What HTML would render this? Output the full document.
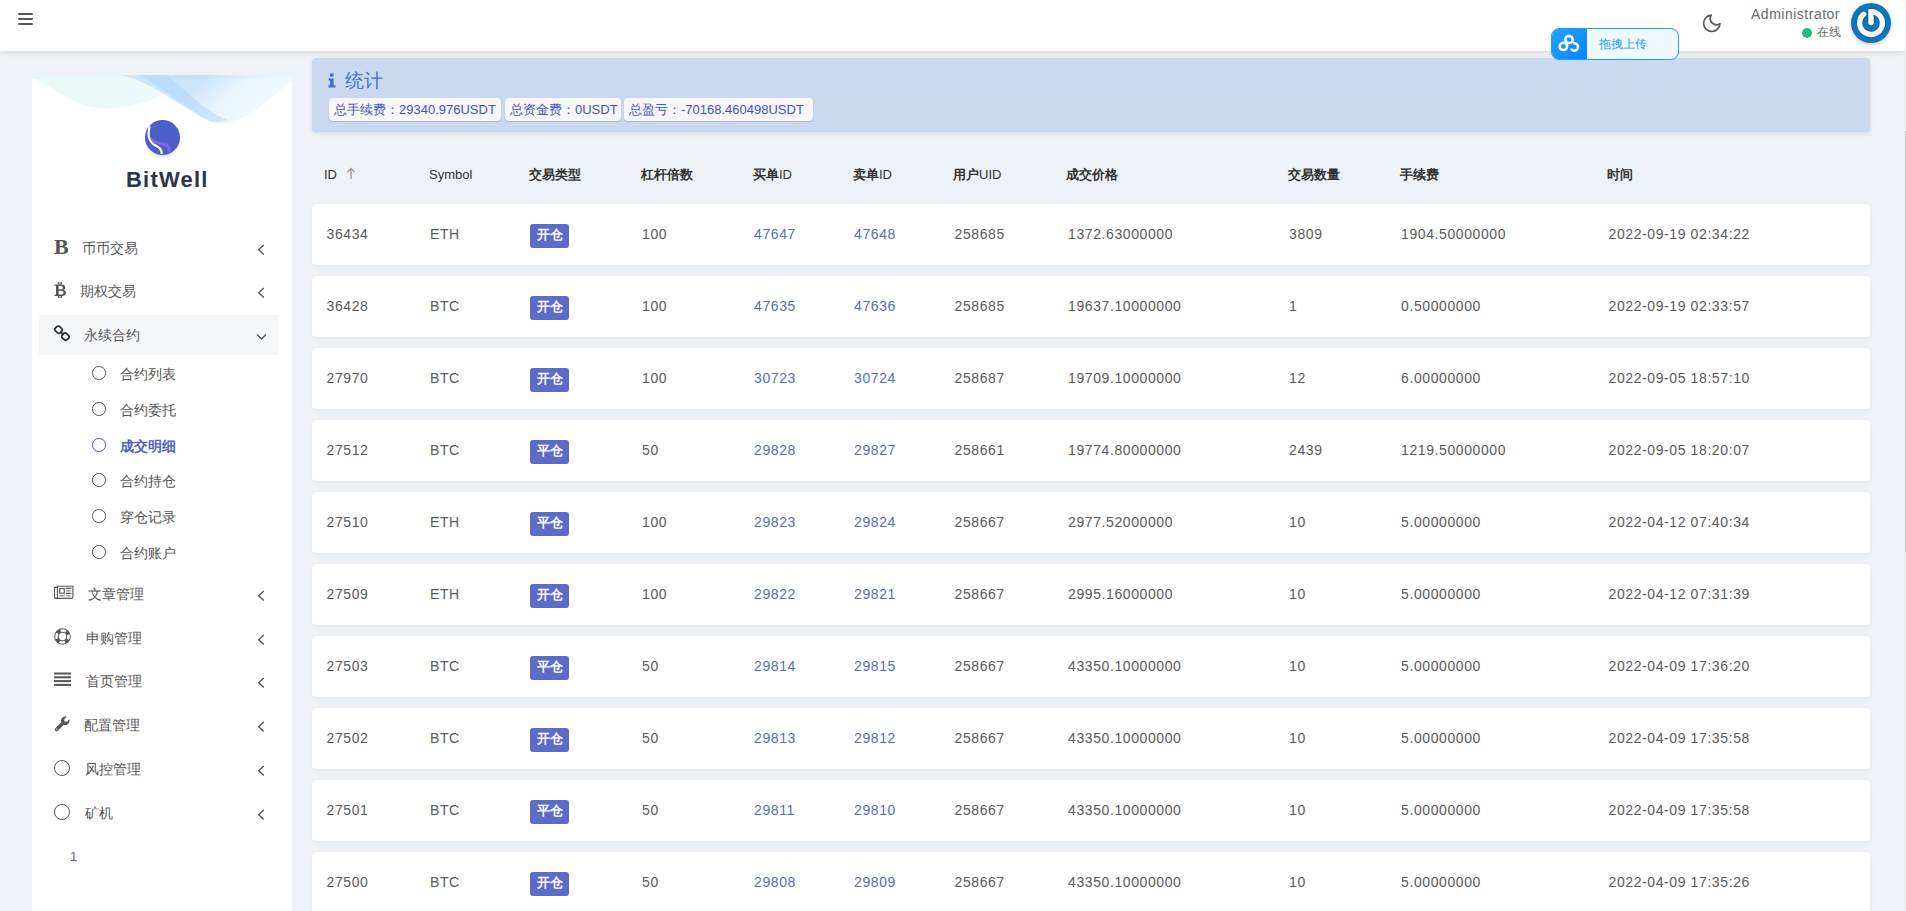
<!DOCTYPE html>
<html><head><meta charset="utf-8">
<style>
*{box-sizing:border-box;margin:0;padding:0}
html,body{width:1906px;height:911px;overflow:hidden}
body{background:#eef1f6;font-family:"Liberation Sans",sans-serif;color:#333;position:relative}
.abs{position:absolute}
#hdr{position:absolute;left:0;top:0;width:1905px;height:51px;background:#fff;box-shadow:0 1px 6px rgba(0,0,0,.12);z-index:5}
#side{position:absolute;left:32px;top:75px;width:260px;height:900px;background:#fff;overflow:hidden}
#stats{position:absolute;left:312px;top:58px;width:1558px;height:74px;background:#cad9ef;border-radius:4px;box-shadow:0 2px 4px rgba(0,0,0,.08)}
.row{position:absolute;left:312px;width:1558px;height:61px;background:#fff;border-radius:4px;box-shadow:0 2px 5px rgba(0,0,0,.05)}
.c{position:absolute;font-size:14px;line-height:16px;color:#5a5a5a;letter-spacing:0.6px;white-space:nowrap}
.th{position:absolute;top:167px;font-size:13px;line-height:16px;color:#333;white-space:nowrap}.th b{font-weight:bold}
.lk{color:#5a6bc6}
.bd{position:absolute;width:39px;height:24px;background:#5b6bc6;border-radius:3px;color:#fff;font-size:13px;font-weight:bold;text-align:center;line-height:22px}
.mi{position:absolute;left:0;width:260px;height:40px;font-size:14px;color:#555}
.sb{position:absolute;top:40px;height:23px;background:#f6f7fa;border-radius:4px;box-shadow:0 1px 1px rgba(60,80,120,.25);font-size:13px;line-height:23px;color:#4453bd;padding-left:5px;white-space:nowrap;letter-spacing:0}
.mt{position:absolute;font-size:14px;line-height:20px;color:#555;white-space:nowrap}

</style></head><body>
<div id="hdr">
  <div class="abs" style="left:18px;top:13px;width:15px;height:2px;background:#585858;border-radius:1px"></div>
  <div class="abs" style="left:18px;top:18px;width:15px;height:2px;background:#585858;border-radius:1px"></div>
  <div class="abs" style="left:18px;top:23px;width:15px;height:2px;background:#585858;border-radius:1px"></div>
  <svg class="abs" style="left:1701px;top:13px" width="22" height="22" viewBox="0 0 22 22"><path d="M10.3 2.1A8.2 8.2 0 1 0 19 10.6A6.2 6.2 0 0 1 10.3 2.1Z" fill="none" stroke="#5a5a5a" stroke-width="1.7" stroke-linejoin="round"/></svg>
  <div class="abs" style="right:65px;top:5px;font-size:14px;line-height:18px;color:#6a6a6a;letter-spacing:0.5px;white-space:nowrap">Administrator</div>
  <div class="abs" style="left:1802px;top:28px;width:10px;height:10px;border-radius:50%;background:#26b77a"></div>
  <div class="abs" style="left:1817px;top:24px;font-size:12px;line-height:17px;color:#666">在线</div>
  <div class="abs" style="left:1851px;top:3px;width:40px;height:40px;border-radius:50%;background:#0f76bb;box-shadow:0 2px 4px rgba(0,0,0,.2)">
    <svg class="abs" style="left:0;top:0" width="40" height="40" viewBox="0 0 40 40"><path d="M20 19.6V8.6A11.4 11.4 0 1 1 12.67 11.27" fill="none" stroke="#fafafa" stroke-width="5.4" stroke-linecap="round" style="filter:drop-shadow(0 0.6px 0.8px rgba(0,0,0,.35))"/></svg>
  </div>
</div>
<div id="up" class="abs" style="left:1551px;top:28px;width:128px;height:32px;border:1px solid #1c9dff;border-radius:8px;background:#eef8ff;overflow:hidden;z-index:6">
  <div class="abs" style="left:0;top:0;width:35px;height:30px;background:linear-gradient(135deg,#21a4ff,#0a82ff)"></div>
  <svg class="abs" style="left:6px;top:4px" width="24" height="22" viewBox="0 0 24 22"><circle cx="11" cy="6.6" r="3.7" fill="none" stroke="#fff" stroke-width="2.5"/><circle cx="5.4" cy="13.4" r="3.7" fill="none" stroke="#fff" stroke-width="2.5"/><path d="M13 15.6A3.7 3.7 0 1 0 15.2 10.5" fill="none" stroke="#fff" stroke-width="2.4"/></svg>
  <div class="abs" style="left:47px;top:7px;font-size:12px;line-height:16px;color:#1b9cff;white-space:nowrap">拖拽上传</div>
</div>
<div id="stats">
  <svg class="abs" style="left:16px;top:15px" width="8" height="15" viewBox="0 0 8 15"><rect x="2" y="0.5" width="3.6" height="3" fill="#3d6dd6"/><path d="M0.5 5.5H5.6V12.2H7.5V14.5H0.5V12.2H2.2V7.6H0.5Z" fill="#3d6dd6"/></svg>
  <div class="abs" style="left:33px;top:10px;font-size:19px;line-height:25px;color:#4a70d0">统计</div>
  <div class="sb" style="left:17px;width:172px">总手续费：29340.976USDT</div>
  <div class="sb" style="left:193px;width:116px">总资金费：0USDT</div>
  <div class="sb" style="left:312px;width:189px">总盈亏：-70168.460498USDT</div>
</div>
<div class="abs" style="left:1905px;top:0;width:1px;height:911px;background:#ebebeb;z-index:9"></div>
<div class="abs" style="left:1905px;top:131px;width:1px;height:421px;background:#c3c3c3;z-index:9"></div>
<div id="side">
  <svg class="abs" style="left:0;top:0" width="260" height="60" viewBox="0 0 260 60">
    <defs>
      <linearGradient id="wg1" x1="0" y1="0" x2="1" y2="0"><stop offset="0" stop-color="#e2f7f1"/><stop offset="1" stop-color="#eaf5fb"/></linearGradient>
      <linearGradient id="wg2" x1="0" y1="0" x2="1" y2="0.3"><stop offset="0" stop-color="#c4e2fb"/><stop offset="0.45" stop-color="#b3d9f9"/><stop offset="0.7" stop-color="#dfeffd"/><stop offset="1" stop-color="#eef7fe"/></linearGradient>
    </defs>
    <rect x="0" y="0" width="260" height="4" fill="#eef6fc"/>
    <path d="M0 0H170C150 6 130 22 110 28C90 34 70 36 52 30C35 24 18 10 0 3Z" fill="url(#wg1)" opacity="0.7"/>
    <path d="M90 0H260V6C245 16 225 40 200 47C188 50 180 48 170 42C145 28 120 8 90 0Z" fill="url(#wg2)" opacity="0.68"/>
    <path d="M105 0H135C150 12 170 34 195 45C185 49 176 47 168 41C145 26 125 8 105 0Z" fill="#a9d3f8" opacity="0.45"/>
  </svg>
  <div class="abs" style="left:113px;top:45px;width:35px;height:35px;border-radius:50%;background:#4d5ec6;box-shadow:0 2px 3px rgba(0,0,0,.12);overflow:hidden">
    <svg class="abs" style="left:0;top:0" width="35" height="35" viewBox="0 0 35 35"><path d="M5.8 18.6C9 22.6 14 23.4 19 24.2C23.2 25 25 27.5 24 31" fill="none" stroke="#7a68f0" stroke-width="2.8" stroke-linecap="round"/><path d="M4.8 6.2C2.6 13.5 3 20.5 9 24.6C13 27.2 16.6 27.6 16.8 34" fill="none" stroke="#fff" stroke-width="2.2"/></svg>
  </div>
  <div class="abs" style="left:94px;top:93px;font-size:22px;line-height:24px;font-weight:bold;color:#2d3646;letter-spacing:1.2px;white-space:nowrap">BitWell</div>

<div class="abs" style="left:7px;top:240px;width:239px;height:40px;background:#f5f6f8"></div>
<div class="abs" style="left:22px;top:161px;font-family:'Liberation Serif',serif;font-weight:bold;font-size:22px;line-height:22px;color:#555">B</div>
<div class="mt" style="left:50px;top:163px">币币交易</div>
<svg class="abs" style="left:225px;top:169px" width="8" height="12" viewBox="0 0 8 12"><path d="M6.8 1L1.7 5.7L6.8 10.4" fill="none" stroke="#555" stroke-width="1.4"/></svg>
<svg class="abs" style="left:22px;top:207px" width="13" height="16" viewBox="0 0 13 16"><path d="M0.5 2.5H7.5C10 2.5 11.2 3.8 11.2 5.6C11.2 6.9 10.3 7.7 9.4 8C10.8 8.3 12 9.3 12 11C12 13 10.5 14 8 14H0.5V12.8H2V3.7H0.5Z" fill="#555"/><path d="M4.6 4V7.3H7.2C8.3 7.3 8.8 6.7 8.8 5.7C8.8 4.7 8.2 4 7.2 4ZM4.6 8.7V12.5H7.5C8.8 12.5 9.5 11.8 9.5 10.6C9.5 9.4 8.8 8.7 7.5 8.7Z" fill="#fff"/><rect x="3.9" y="0" width="1.5" height="2.5" fill="#555"/><rect x="6.5" y="0" width="1.5" height="2.5" fill="#555"/><rect x="3.9" y="14" width="1.5" height="2" fill="#555"/><rect x="6.5" y="14" width="1.5" height="2" fill="#555"/></svg>
<div class="mt" style="left:48px;top:206px">期权交易</div>
<svg class="abs" style="left:225px;top:212px" width="8" height="12" viewBox="0 0 8 12"><path d="M6.8 1L1.7 5.7L6.8 10.4" fill="none" stroke="#555" stroke-width="1.4"/></svg>
<svg class="abs" style="left:22px;top:250px" width="17" height="17" viewBox="0 0 17 17"><rect x="1.2" y="1.7" width="6.8" height="6" rx="2.1" transform="rotate(45 4.6 4.7)" fill="none" stroke="#2b2b2b" stroke-width="1.7"/><rect x="8" y="8.6" width="6.8" height="6" rx="2.1" transform="rotate(45 11.4 11.6)" fill="none" stroke="#2b2b2b" stroke-width="1.7"/><path d="M6.3 6.6L9.6 9.8" stroke="#2b2b2b" stroke-width="1.8"/></svg>
<div class="mt" style="left:52px;top:250px">永续合约</div>
<svg class="abs" style="left:224px;top:258px" width="11" height="8" viewBox="0 0 11 8"><path d="M1 1.5L5.5 6L10 1.5" fill="none" stroke="#555" stroke-width="1.4"/></svg>
<svg class="abs" style="left:22px;top:510px" width="20" height="15" viewBox="0 0 20 15"><path d="M3.4 1.3H18.9V12A1.4 1.4 0 0 1 17.5 13.4H1.7A1.3 1.3 0 0 1 0.5 12.1V2.4H3.4Z" fill="none" stroke="#555" stroke-width="1.1" stroke-linejoin="round"/><path d="M3.4 1.3V13.2" stroke="#555" stroke-width="1.1"/><rect x="5.7" y="3.6" width="4.6" height="4.6" fill="none" stroke="#555" stroke-width="1.1"/><path d="M12.2 3.4H16.9M12.2 8.4H16.9" stroke="#555" stroke-width="1.1" stroke-linecap="round"/><path d="M12.2 5.9H16.9M5.2 10.9H10.8M12.2 10.9H16.9" stroke="#888" stroke-width="1.3"/></svg>
<div class="mt" style="left:56px;top:509px">文章管理</div>
<svg class="abs" style="left:225px;top:515px" width="8" height="12" viewBox="0 0 8 12"><path d="M6.8 1L1.7 5.7L6.8 10.4" fill="none" stroke="#555" stroke-width="1.4"/></svg>
<svg class="abs" style="left:22px;top:553px" width="17" height="17" viewBox="0 0 17 17"><circle cx="8.5" cy="8.5" r="8.3" fill="#555"/><circle cx="8.5" cy="8.5" r="3.7" fill="#fff"/><circle cx="8.5" cy="8.5" r="6" fill="none" stroke="#fff" stroke-width="2.5" stroke-dasharray="5.6 3.82" stroke-dashoffset="2.8"/></svg>
<div class="mt" style="left:54px;top:553px">申购管理</div>
<svg class="abs" style="left:225px;top:559px" width="8" height="12" viewBox="0 0 8 12"><path d="M6.8 1L1.7 5.7L6.8 10.4" fill="none" stroke="#555" stroke-width="1.4"/></svg>
<svg class="abs" style="left:22px;top:597px" width="17" height="14" viewBox="0 0 17 14"><rect x="0" y="0.5" width="17" height="2" fill="#555"/><rect x="0" y="4.3" width="17" height="2" fill="#555"/><rect x="0" y="8.1" width="17" height="2" fill="#555"/><rect x="0" y="11.9" width="17" height="2" fill="#555"/></svg>
<div class="mt" style="left:54px;top:596px">首页管理</div>
<svg class="abs" style="left:225px;top:602px" width="8" height="12" viewBox="0 0 8 12"><path d="M6.8 1L1.7 5.7L6.8 10.4" fill="none" stroke="#555" stroke-width="1.4"/></svg>
<svg class="abs" style="left:22px;top:641px" width="16" height="16" viewBox="0 0 16 16"><path d="M2.6 13.4L9 7" stroke="#555" stroke-width="3.5" stroke-linecap="round"/><circle cx="11.3" cy="4.7" r="4.3" fill="#555"/><circle cx="12.1" cy="3.9" r="1.9" fill="#fff"/><path d="M10.8 2.6L13.4 5.2L17 1.6L14.4 -1Z" fill="#fff"/><circle cx="2.9" cy="13.1" r="0.7" fill="#fff"/></svg>
<div class="mt" style="left:52px;top:640px">配置管理</div>
<svg class="abs" style="left:225px;top:646px" width="8" height="12" viewBox="0 0 8 12"><path d="M6.8 1L1.7 5.7L6.8 10.4" fill="none" stroke="#555" stroke-width="1.4"/></svg>
<div class="abs" style="left:22px;top:685px;width:16px;height:16px;border:1.6px solid #555;border-radius:50%"></div>
<div class="mt" style="left:53px;top:684px">风控管理</div>
<svg class="abs" style="left:225px;top:690px" width="8" height="12" viewBox="0 0 8 12"><path d="M6.8 1L1.7 5.7L6.8 10.4" fill="none" stroke="#555" stroke-width="1.4"/></svg>
<div class="abs" style="left:22px;top:729px;width:16px;height:16px;border:1.6px solid #555;border-radius:50%"></div>
<div class="mt" style="left:53px;top:728px">矿机</div>
<svg class="abs" style="left:225px;top:734px" width="8" height="12" viewBox="0 0 8 12"><path d="M6.8 1L1.7 5.7L6.8 10.4" fill="none" stroke="#555" stroke-width="1.4"/></svg>
<div class="abs" style="left:60px;top:291px;width:13.5px;height:13.5px;border:1.3px solid #555;border-radius:50%"></div>
<div class="mt" style="left:88px;top:289px;">合约列表</div>
<div class="abs" style="left:60px;top:327px;width:13.5px;height:13.5px;border:1.3px solid #555;border-radius:50%"></div>
<div class="mt" style="left:88px;top:325px;">合约委托</div>
<div class="abs" style="left:60px;top:363px;width:13.5px;height:13.5px;border:1.3px solid #4f5fc6;border-radius:50%"></div>
<div class="mt" style="left:88px;top:361px;font-weight:bold;color:#4f5fc6">成交明细</div>
<div class="abs" style="left:60px;top:398px;width:13.5px;height:13.5px;border:1.3px solid #555;border-radius:50%"></div>
<div class="mt" style="left:88px;top:396px;">合约持仓</div>
<div class="abs" style="left:60px;top:434px;width:13.5px;height:13.5px;border:1.3px solid #555;border-radius:50%"></div>
<div class="mt" style="left:88px;top:432px;">穿仓记录</div>
<div class="abs" style="left:60px;top:470px;width:13.5px;height:13.5px;border:1.3px solid #555;border-radius:50%"></div>
<div class="mt" style="left:88px;top:468px;">合约账户</div>
<div class="abs" style="left:38px;top:774px;font-size:13px;line-height:16px;color:#666">1</div>
</div>
<div class="th" style="left:324px">ID</div><div class="th" style="left:429px">Symbol</div><div class="th" style="left:529px"><b>交易类型</b></div><div class="th" style="left:641px"><b>杠杆倍数</b></div><div class="th" style="left:753px"><b>买单</b>ID</div><div class="th" style="left:853px"><b>卖单</b>ID</div><div class="th" style="left:953px"><b>用户</b>UID</div><div class="th" style="left:1066px"><b>成交价格</b></div><div class="th" style="left:1288px"><b>交易数量</b></div><div class="th" style="left:1400px"><b>手续费</b></div><div class="th" style="left:1607px"><b>时间</b></div><svg class="abs" style="left:346px;top:167px" width="10" height="13" viewBox="0 0 10 13"><path d="M5 1.5V12M1.5 5L5 1.5L8.5 5" fill="none" stroke="#999" stroke-width="1.3"/></svg>
<div class="row" style="top:204px"></div><div class="c" style="left:326.5px;top:226px">36434</div><div class="c" style="left:430px;top:226px">ETH</div><div class="bd" style="left:530px;top:224px">开仓</div><div class="c" style="left:642px;top:226px">100</div><div class="c lk" style="left:754px;top:226px">47647</div><div class="c lk" style="left:854px;top:226px">47648</div><div class="c" style="left:954.5px;top:226px">258685</div><div class="c" style="left:1068px;top:226px">1372.63000000</div><div class="c" style="left:1289px;top:226px">3809</div><div class="c" style="left:1401px;top:226px">1904.50000000</div><div class="c" style="left:1608.5px;top:226px">2022-09-19 02:34:22</div>
<div class="row" style="top:276px"></div><div class="c" style="left:326.5px;top:298px">36428</div><div class="c" style="left:430px;top:298px">BTC</div><div class="bd" style="left:530px;top:296px">开仓</div><div class="c" style="left:642px;top:298px">100</div><div class="c lk" style="left:754px;top:298px">47635</div><div class="c lk" style="left:854px;top:298px">47636</div><div class="c" style="left:954.5px;top:298px">258685</div><div class="c" style="left:1068px;top:298px">19637.10000000</div><div class="c" style="left:1289px;top:298px">1</div><div class="c" style="left:1401px;top:298px">0.50000000</div><div class="c" style="left:1608.5px;top:298px">2022-09-19 02:33:57</div>
<div class="row" style="top:348px"></div><div class="c" style="left:326.5px;top:370px">27970</div><div class="c" style="left:430px;top:370px">BTC</div><div class="bd" style="left:530px;top:368px">开仓</div><div class="c" style="left:642px;top:370px">100</div><div class="c lk" style="left:754px;top:370px">30723</div><div class="c lk" style="left:854px;top:370px">30724</div><div class="c" style="left:954.5px;top:370px">258687</div><div class="c" style="left:1068px;top:370px">19709.10000000</div><div class="c" style="left:1289px;top:370px">12</div><div class="c" style="left:1401px;top:370px">6.00000000</div><div class="c" style="left:1608.5px;top:370px">2022-09-05 18:57:10</div>
<div class="row" style="top:420px"></div><div class="c" style="left:326.5px;top:442px">27512</div><div class="c" style="left:430px;top:442px">BTC</div><div class="bd" style="left:530px;top:440px">平仓</div><div class="c" style="left:642px;top:442px">50</div><div class="c lk" style="left:754px;top:442px">29828</div><div class="c lk" style="left:854px;top:442px">29827</div><div class="c" style="left:954.5px;top:442px">258661</div><div class="c" style="left:1068px;top:442px">19774.80000000</div><div class="c" style="left:1289px;top:442px">2439</div><div class="c" style="left:1401px;top:442px">1219.50000000</div><div class="c" style="left:1608.5px;top:442px">2022-09-05 18:20:07</div>
<div class="row" style="top:492px"></div><div class="c" style="left:326.5px;top:514px">27510</div><div class="c" style="left:430px;top:514px">ETH</div><div class="bd" style="left:530px;top:512px">平仓</div><div class="c" style="left:642px;top:514px">100</div><div class="c lk" style="left:754px;top:514px">29823</div><div class="c lk" style="left:854px;top:514px">29824</div><div class="c" style="left:954.5px;top:514px">258667</div><div class="c" style="left:1068px;top:514px">2977.52000000</div><div class="c" style="left:1289px;top:514px">10</div><div class="c" style="left:1401px;top:514px">5.00000000</div><div class="c" style="left:1608.5px;top:514px">2022-04-12 07:40:34</div>
<div class="row" style="top:564px"></div><div class="c" style="left:326.5px;top:586px">27509</div><div class="c" style="left:430px;top:586px">ETH</div><div class="bd" style="left:530px;top:584px">开仓</div><div class="c" style="left:642px;top:586px">100</div><div class="c lk" style="left:754px;top:586px">29822</div><div class="c lk" style="left:854px;top:586px">29821</div><div class="c" style="left:954.5px;top:586px">258667</div><div class="c" style="left:1068px;top:586px">2995.16000000</div><div class="c" style="left:1289px;top:586px">10</div><div class="c" style="left:1401px;top:586px">5.00000000</div><div class="c" style="left:1608.5px;top:586px">2022-04-12 07:31:39</div>
<div class="row" style="top:636px"></div><div class="c" style="left:326.5px;top:658px">27503</div><div class="c" style="left:430px;top:658px">BTC</div><div class="bd" style="left:530px;top:656px">平仓</div><div class="c" style="left:642px;top:658px">50</div><div class="c lk" style="left:754px;top:658px">29814</div><div class="c lk" style="left:854px;top:658px">29815</div><div class="c" style="left:954.5px;top:658px">258667</div><div class="c" style="left:1068px;top:658px">43350.10000000</div><div class="c" style="left:1289px;top:658px">10</div><div class="c" style="left:1401px;top:658px">5.00000000</div><div class="c" style="left:1608.5px;top:658px">2022-04-09 17:36:20</div>
<div class="row" style="top:708px"></div><div class="c" style="left:326.5px;top:730px">27502</div><div class="c" style="left:430px;top:730px">BTC</div><div class="bd" style="left:530px;top:728px">开仓</div><div class="c" style="left:642px;top:730px">50</div><div class="c lk" style="left:754px;top:730px">29813</div><div class="c lk" style="left:854px;top:730px">29812</div><div class="c" style="left:954.5px;top:730px">258667</div><div class="c" style="left:1068px;top:730px">43350.10000000</div><div class="c" style="left:1289px;top:730px">10</div><div class="c" style="left:1401px;top:730px">5.00000000</div><div class="c" style="left:1608.5px;top:730px">2022-04-09 17:35:58</div>
<div class="row" style="top:780px"></div><div class="c" style="left:326.5px;top:802px">27501</div><div class="c" style="left:430px;top:802px">BTC</div><div class="bd" style="left:530px;top:800px">平仓</div><div class="c" style="left:642px;top:802px">50</div><div class="c lk" style="left:754px;top:802px">29811</div><div class="c lk" style="left:854px;top:802px">29810</div><div class="c" style="left:954.5px;top:802px">258667</div><div class="c" style="left:1068px;top:802px">43350.10000000</div><div class="c" style="left:1289px;top:802px">10</div><div class="c" style="left:1401px;top:802px">5.00000000</div><div class="c" style="left:1608.5px;top:802px">2022-04-09 17:35:58</div>
<div class="row" style="top:852px"></div><div class="c" style="left:326.5px;top:874px">27500</div><div class="c" style="left:430px;top:874px">BTC</div><div class="bd" style="left:530px;top:872px">开仓</div><div class="c" style="left:642px;top:874px">50</div><div class="c lk" style="left:754px;top:874px">29808</div><div class="c lk" style="left:854px;top:874px">29809</div><div class="c" style="left:954.5px;top:874px">258667</div><div class="c" style="left:1068px;top:874px">43350.10000000</div><div class="c" style="left:1289px;top:874px">10</div><div class="c" style="left:1401px;top:874px">5.00000000</div><div class="c" style="left:1608.5px;top:874px">2022-04-09 17:35:26</div>
</body></html>
